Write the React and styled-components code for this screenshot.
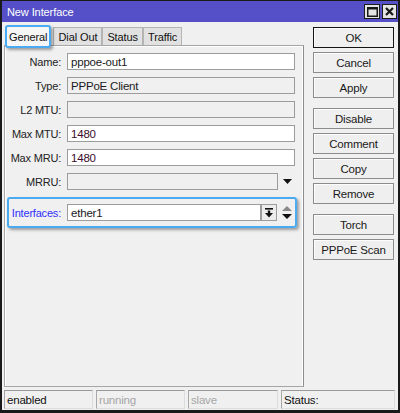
import React from 'react';
import styled, { createGlobalStyle } from 'styled-components';

const GlobalStyle = createGlobalStyle`
  html, body { margin: 0; padding: 0; background: #fff; }
  body { font-family: "Liberation Sans", Arial, sans-serif; font-size: 11px; color: #1a1a1a; }
  * { box-sizing: border-box; }
`;

const Window = styled.div`
  width: 400px;
  height: 413px;
  display: flex;
  flex-direction: column;
  background: #f0f0f0;
  border: 2px solid #1a1a1a;
  border-top-width: 1px;
  border-bottom-width: 3px;
`;

const TitleBar = styled.div`
  height: 21px;
  flex: none;
  display: flex;
  align-items: center;
  background: #5550c8;
  color: #fff;
  padding: 0 1px 0 5px;
  font-size: 11px;
`;

const Title = styled.div`
  flex: 1;
  letter-spacing: -0.1px;
`;

const TitleButton = styled.div`
  width: ${(p) => p.w}px;
  height: 15px;
  margin-left: 2px;
  background: #e4e4e4;
  border: 1px solid #1c1c1c;
  display: flex;
  align-items: center;
  justify-content: center;
`;

const Main = styled.div`
  flex: 1;
  display: flex;
  padding: 3px 0 0 2px;
  min-height: 0;
`;

const LeftColumn = styled.div`
  width: 300px;
  display: flex;
  flex-direction: column;
`;

const TabBar = styled.div`
  height: 20px;
  flex: none;
  display: flex;
  align-items: flex-end;
  padding-left: 1px;
`;

const Tab = styled.div`
  height: ${(p) => (p.active ? 23 : 18)}px;
  padding: 0 ${(p) => (p.active ? 2 : 4)}px;
  margin-right: ${(p) => (p.active ? 2 : 0)}px;
  margin-bottom: ${(p) => (p.active ? -3 : 0)}px;
  display: flex;
  align-items: center;
  background: ${(p) => (p.active ? '#f6f6f6' : '#e1e1e1')};
  border: ${(p) => (p.active ? '2px solid #4aabf2' : '1px solid #b4b4b4')};
  border-bottom: ${(p) => (p.active ? '2px solid #4aabf2' : 'none')};
  border-radius: ${(p) => (p.active ? '3px' : '0')};
  box-shadow: ${(p) => (p.active ? '2px 2px 3px rgba(0,0,0,0.35)' : 'none')};
  position: relative;
  z-index: ${(p) => (p.active ? 2 : 0)};
  color: #111;
  font-size: 11px;
  letter-spacing: -0.1px;
`;

const Panel = styled.div`
  flex: 1;
  border: 1px solid #a6a6a6;
  border-right: 1px solid #8e8e8e;
  box-shadow: inset -1px 0 #fff, inset 1px 1px #fff;
  padding: 7px 0 0 0;
  position: relative;
  z-index: 1;
`;

const Row = styled.div`
  display: flex;
  align-items: center;
  height: 17px;
  margin-bottom: 7px;
`;

const Label = styled.div`
  width: ${(p) => p.w || 56}px;
  text-align: right;
  margin-right: 6px;
  color: ${(p) => p.color || '#222'};
  white-space: nowrap;
  font-size: 11px;
  letter-spacing: -0.2px;
`;

const Field = styled.div`
  width: ${(p) => p.w}px;
  height: 17px;
  border: 1px solid #9c9c9c;
  background: ${(p) => (p.disabled ? '#f0f0f0' : '#fff')};
  color: ${(p) => p.color || '#1a1a1a'};
  padding-left: 3px;
  display: flex;
  align-items: center;
  font-size: 11.5px;
  letter-spacing: -0.2px;
`;

const IconSlot = styled.div`
  width: ${(p) => p.w}px;
  height: 17px;
  margin-left: ${(p) => p.ml}px;
  display: flex;
  align-items: center;
  justify-content: center;
`;

const SmallButton = styled.div`
  width: 16px;
  height: 17px;
  border: 1px solid #9c9c9c;
  background: #ececec;
  display: flex;
  align-items: center;
  justify-content: center;
`;

const Highlight = styled.div`
  width: 290px;
  margin: 5px 0 0 2px;
  display: flex;
  align-items: center;
  padding: 5px 0;
  border: 2px solid #4aabf2;
  border-radius: 3px;
  box-shadow: 2px 2px 3px rgba(0,0,0,0.35);
`;

const RightColumn = styled.div`
  width: 81px;
  margin-left: 9px;
  padding-top: 2px;
  display: flex;
  flex-direction: column;
`;

const Button = styled.div`
  height: 21px;
  flex: none;
  margin-bottom: 4px;
  margin-top: ${(p) => (p.spaced ? 6 : 0)}px;
  border: 1px solid ${(p) => (p.primary ? '#141414' : '#8c8c8c')};
  box-shadow: inset 1px 1px #fdfdfd;
  background: #efefef;
  display: flex;
  align-items: center;
  justify-content: center;
  color: #1a1a1a;
  font-size: 11.5px;
  letter-spacing: -0.2px;
`;

const StatusBar = styled.div`
  height: 19px;
  flex: none;
  margin: 3px 0 1px;
  padding-left: 2px;
  display: flex;
  gap: 3px;
`;

const StatusCell = styled.div`
  width: ${(p) => p.w}px;
  height: 19px;
  border: 1px solid #a8a8a8;
  border-top-color: #9a9a9a;
  border-right-color: #dcdcdc;
  border-bottom-color: #dcdcdc;
  padding-left: 2px;
  display: flex;
  align-items: center;
  color: ${(p) => (p.dim ? '#a6a6a6' : '#111')};
  font-size: 11.5px;
  letter-spacing: -0.2px;
`;

const MaxIcon = () => (
  <svg width="11" height="10" viewBox="0 0 11 10">
    <rect x="0.75" y="0.75" width="9.5" height="8.5" fill="none" stroke="#1a1a1a" strokeWidth="1.5" />
    <rect x="0" y="0" width="11" height="2.5" fill="#1a1a1a" />
  </svg>
);

const CloseIcon = () => (
  <svg width="9" height="9" viewBox="0 0 9 9">
    <path d="M1 1 L8 8 M8 1 L1 8" stroke="#1a1a1a" strokeWidth="2.2" />
  </svg>
);

const DropArrow = () => (
  <svg width="9" height="5" viewBox="0 0 9 5">
    <path d="M0 0 H9 L4.5 5 Z" fill="#111" />
  </svg>
);

const DownToBar = () => (
  <svg width="8" height="10" viewBox="0 0 8 10">
    <rect x="0" y="0" width="8" height="1.6" fill="#111" />
    <rect x="2.8" y="2.5" width="2.4" height="3" fill="#111" />
    <path d="M0 5 H8 L4 9.5 Z" fill="#111" />
  </svg>
);

const UpDown = () => (
  <svg width="10" height="15" viewBox="0 0 10 15">
    <path d="M0 6 L5 1 L10 6 Z" fill="#8a8a8a" />
    <path d="M0 9 L5 14 L10 9 Z" fill="#111" />
  </svg>
);

const fields = [
  { label: 'Name:', value: 'pppoe-out1' },
  { label: 'Type:', value: 'PPPoE Client', disabled: true },
  { label: 'L2 MTU:', value: '', disabled: true },
  { label: 'Max MTU:', value: '1480', color: '#3c0c2c' },
  { label: 'Max MRU:', value: '1480', color: '#3c0c2c' },
];

const buttons = [
  { text: 'OK', primary: true },
  { text: 'Cancel' },
  { text: 'Apply' },
  { text: 'Disable', spaced: true },
  { text: 'Comment' },
  { text: 'Copy' },
  { text: 'Remove' },
  { text: 'Torch', spaced: true },
  { text: 'PPPoE Scan' },
];

const App = () => {
  return (
    <>
      <GlobalStyle />
      <Window>
        <TitleBar>
          <Title>New Interface</Title>
          <TitleButton w={16}>
            <MaxIcon />
          </TitleButton>
          <TitleButton w={15}>
            <CloseIcon />
          </TitleButton>
        </TitleBar>
        <Main>
          <LeftColumn>
            <TabBar>
              <Tab active>General</Tab>
              <Tab>Dial Out</Tab>
              <Tab>Status</Tab>
              <Tab>Traffic</Tab>
            </TabBar>
            <Panel>
              {fields.map((f) => (
                <Row key={f.label}>
                  <Label>{f.label}</Label>
                  <Field w={228} disabled={f.disabled} color={f.color}>
                    {f.value}
                  </Field>
                </Row>
              ))}
              <Row>
                <Label>MRRU:</Label>
                <Field w={211} disabled />
                <IconSlot w={9} ml={5}>
                  <DropArrow />
                </IconSlot>
              </Row>
              <Highlight>
                <Label w={52} color="#2f2fff">Interfaces:</Label>
                <Field w={194}>ether1</Field>
                <SmallButton>
                  <DownToBar />
                </SmallButton>
                <IconSlot w={10} ml={5}>
                  <UpDown />
                </IconSlot>
              </Highlight>
            </Panel>
          </LeftColumn>
          <RightColumn>
            {buttons.map((b) => (
              <Button key={b.text} primary={b.primary} spaced={b.spaced}>
                {b.text}
              </Button>
            ))}
          </RightColumn>
        </Main>
        <StatusBar>
          <StatusCell w={89}>enabled</StatusCell>
          <StatusCell w={89} dim>running</StatusCell>
          <StatusCell w={90} dim>slave</StatusCell>
          <StatusCell w={114}>Status:</StatusCell>
        </StatusBar>
      </Window>
    </>
  );
};

export default App;
